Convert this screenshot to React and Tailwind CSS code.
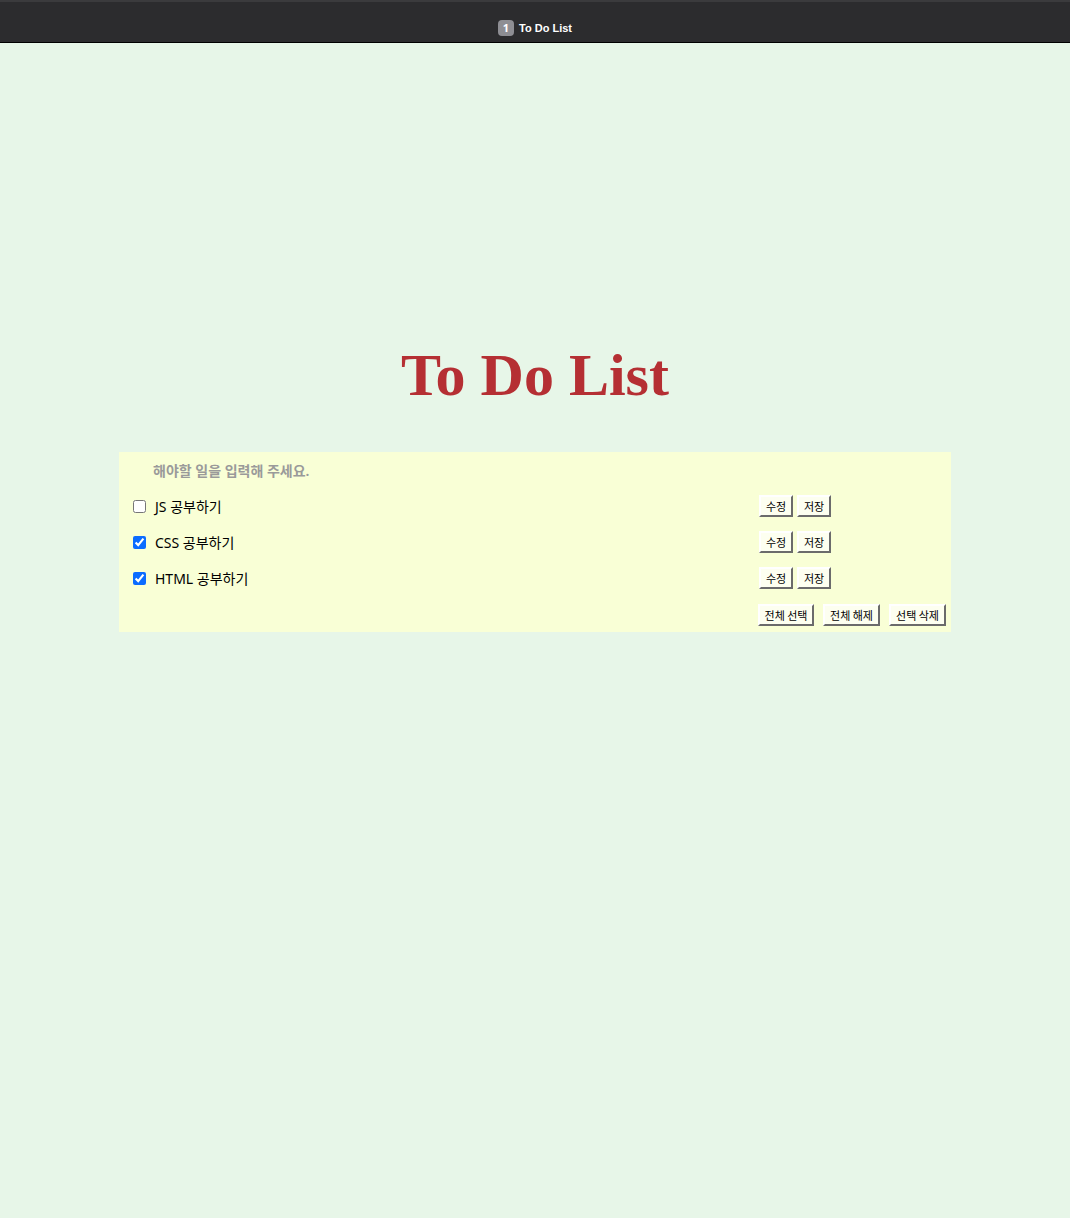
const todos = [
  { id: 1, text: "JS 공부하기", done: false },
  { id: 2, text: "CSS 공부하기", done: true },
  { id: 3, text: "HTML 공부하기", done: true },
];

const SmallButton = ({ children, className = "" }) => (
  <button
    className={
      "h-[22px] bg-[#fdfff0] border-2 border-t-white border-l-white border-r-[#6b6b6b] border-b-[#6b6b6b] text-[11px] text-black leading-none font-['Noto_Sans_CJK_KR',sans-serif] " +
      className
    }
  >
    {children}
  </button>
);

export default function App() {
  return (
    <div className="min-h-[1218px] bg-[#e7f6e8] font-['Noto_Sans','Noto_Sans_CJK_KR',sans-serif]">
      <div className="h-[43px] bg-[#2c2c2e] border-t-2 border-[#3b3b3d] border-b border-b-black flex items-end justify-center pb-[6px]">
        <div className="flex items-center gap-[5px]">
          <span className="w-[16px] h-[16px] rounded-[4px] bg-[#8e8e93] text-white text-[11px] font-bold flex items-center justify-center">
            1
          </span>
          <span className="text-white text-[11px] font-semibold font-['Liberation_Sans',sans-serif]">
            To Do List
          </span>
        </div>
      </div>

      <h1 className="mt-[292px] text-center text-[60px] leading-[80px] font-bold text-[#b52f33] font-['Liberation_Serif',serif]">
        To Do List
      </h1>

      <div className="mx-auto mt-[37px] w-[832px] bg-[#f9ffd6] pb-[6px]">
        <div className="h-[36px] flex items-center pl-[34px]">
          <input
            className="bg-transparent outline-none text-[14px] font-semibold placeholder:text-[#9a9a9a] w-[400px]"
            placeholder="해야할 일을 입력해 주세요."
          />
        </div>
        {todos.map((t) => (
          <div key={t.id} className="h-[36px] flex items-center pl-[14px]">
            <input
              type="checkbox"
              defaultChecked={t.done}
              className="w-[13px] h-[13px] m-0 accent-[#0b6cff]"
            />
            <span className="w-[604px] ml-[9px] text-[14px] text-black">{t.text}</span>
            <div className="flex gap-[4px]">
              <SmallButton className="w-[34px]">수정</SmallButton>
              <SmallButton className="w-[34px]">저장</SmallButton>
            </div>
          </div>
        ))}
        <div className="flex justify-end gap-[9px] pr-[5px] pt-[8px]">
          <SmallButton className="w-[56px]">전체 선택</SmallButton>
          <SmallButton className="w-[57px]">전체 해제</SmallButton>
          <SmallButton className="w-[57px]">선택 삭제</SmallButton>
        </div>
      </div>
    </div>
  );
}
